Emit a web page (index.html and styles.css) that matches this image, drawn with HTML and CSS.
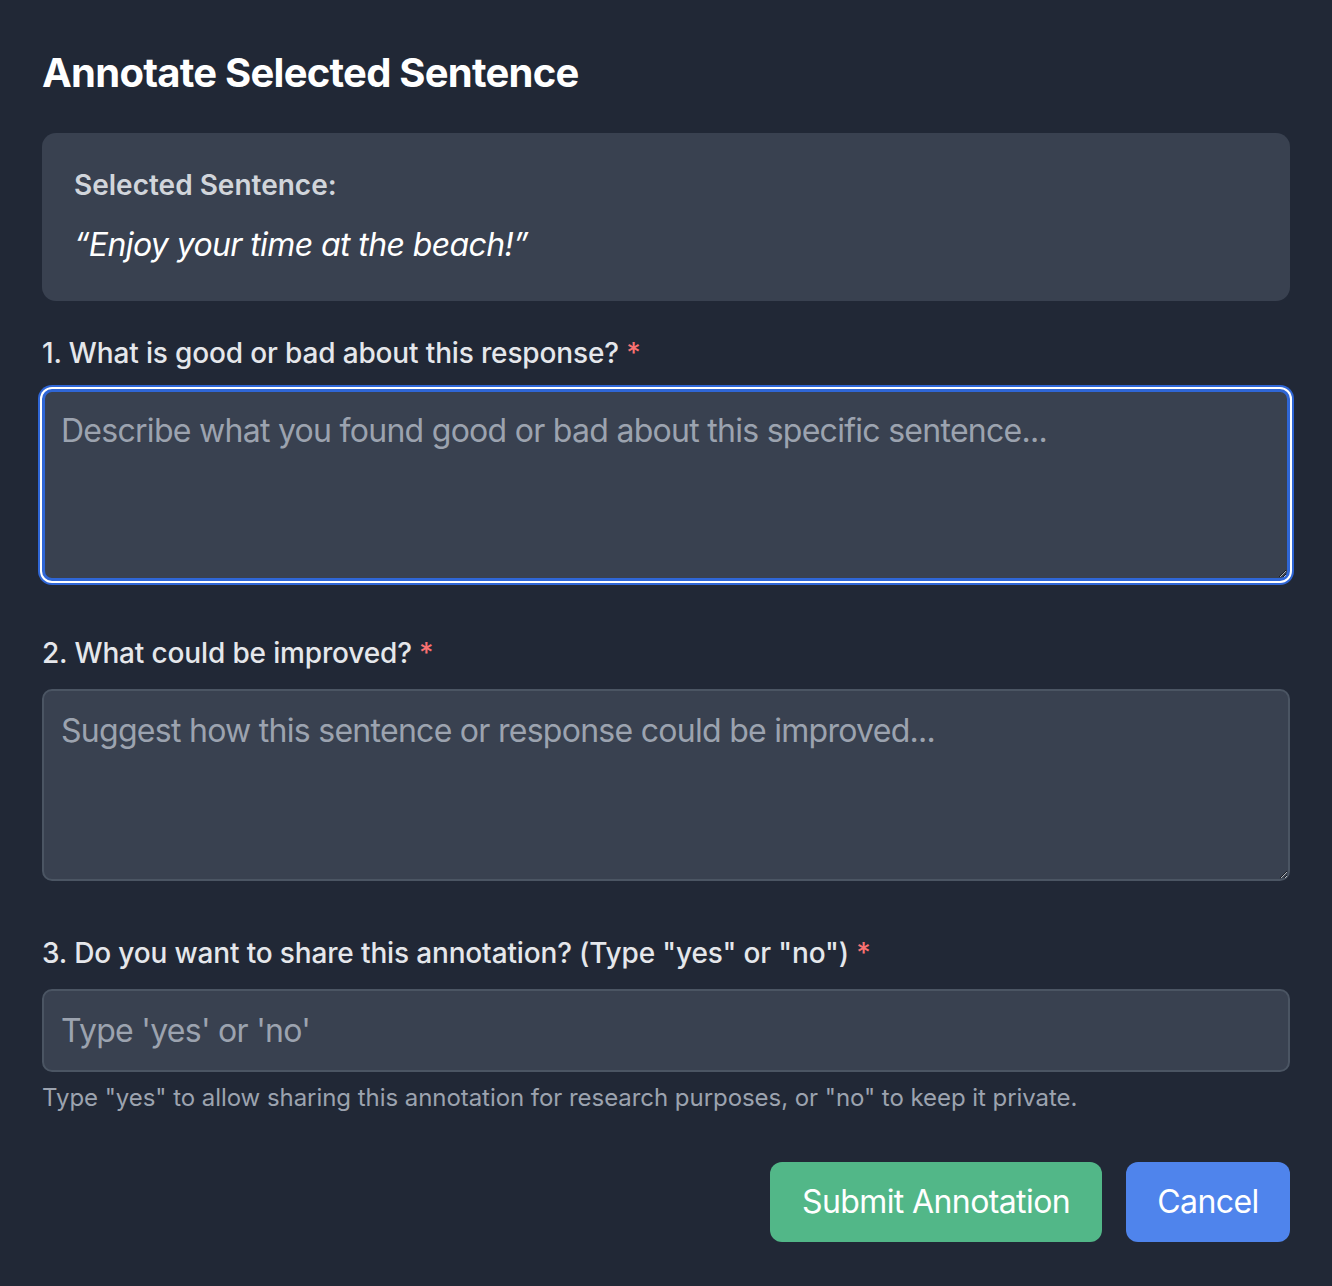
FILE: index.html
```html
<!DOCTYPE html>
<html lang="en">
<head>
<meta charset="utf-8">
<title>Annotate Selected Sentence</title>
<link rel="stylesheet" href="styles.css">
</head>
<body>
<div class="modal">
  <h2 class="title">Annotate Selected Sentence</h2>
  <div class="sentence-card">
    <p class="sentence-label">Selected Sentence:</p>
    <p class="sentence-text">“Enjoy your time at the beach!”</p>
  </div>
  <div class="field">
    <label class="label" for="q1">1. What is good or bad about this response? <span class="req">*</span></label>
    <textarea id="q1" class="textarea focused" placeholder="Describe what you found good or bad about this specific sentence..."></textarea>
  </div>
  <div class="field">
    <label class="label" for="q2">2. What could be improved? <span class="req">*</span></label>
    <textarea id="q2" class="textarea" placeholder="Suggest how this sentence or response could be improved..."></textarea>
  </div>
  <div class="field field-last">
    <label class="label" for="q3">3. Do you want to share this annotation? (Type "yes" or "no") <span class="req">*</span></label>
    <input id="q3" class="input" type="text" placeholder="Type 'yes' or 'no'">
    <p class="help">Type "yes" to allow sharing this annotation for research purposes, or "no" to keep it private.</p>
  </div>
  <div class="actions">
    <button class="btn btn-submit" type="button">Submit Annotation</button>
    <button class="btn btn-cancel" type="button">Cancel</button>
  </div>
</div>
</body>
</html>
```

FILE: styles.css
```css
* { box-sizing: border-box; }
html, body {
  margin: 0;
  padding: 0;
  background: #212836;
}
body {
  font-family: Inter, "Noto Sans", sans-serif;
  color: #e5e7eb;
}
.modal {
  padding: 45px 42px 45px 42px;
}
.title {
  margin: 0 0 32px 0;
  font-size: 40px;
  line-height: 56px;
  font-weight: 700;
  color: #ffffff;
  letter-spacing: -0.75px;
}
.sentence-card {
  background: #394150;
  border-radius: 14px;
  padding: 32px 32px 32px 32px;
  margin-bottom: 32px;
}
.sentence-label {
  margin: 0 0 16px 0;
  font-size: 28px;
  line-height: 40px;
  font-weight: 600;
  color: #d1d5db;
}
.sentence-text {
  margin: 0;
  font-size: 32px;
  line-height: 48px;
  font-style: italic;
  color: #ffffff;
  letter-spacing: -0.6px;
}
.field {
  margin-bottom: 52px;
}
.field-last {
  margin-bottom: 48px;
}
.label {
  display: block;
  font-size: 28px;
  line-height: 40px;
  font-weight: 500;
  color: #e5e7eb;
  margin-bottom: 16px;
  letter-spacing: -0.15px;
}
.req {
  color: #f87171;
}
.textarea, .input {
  display: block;
  width: 100%;
  background: #394150;
  border: 2px solid #4b5563;
  border-radius: 10px;
  color: #f3f4f6;
  font-family: Inter, "Noto Sans", sans-serif;
  font-size: 32px;
  line-height: 48px;
  letter-spacing: -0.72px;
  padding: 16px 17px;
  outline: none;
}
.textarea {
  height: 192px;
  resize: vertical;
}
.input {
  height: 83px;
}
.textarea::placeholder, .input::placeholder {
  color: #9ca3af;
  opacity: 1;
}
.focused {
  border: 3px solid #2f66d6;
  box-shadow: 0 0 0 2px #ffffff, 0 0 0 4px #2f66d6;
  padding: 15px 16px;
}
.help {
  margin: 10px 0 0 0;
  font-size: 24px;
  line-height: 32px;
  color: #9ca3af;
  letter-spacing: -0.05px;
}
.actions {
  display: flex;
  justify-content: flex-end;
  gap: 24px;
}
.btn {
  font-family: Inter, "Noto Sans", sans-serif;
  font-size: 32px;
  line-height: 48px;
  letter-spacing: -0.6px;
  white-space: nowrap;
  padding: 16px 0;
  border: none;
  border-radius: 12px;
  color: #ffffff;
  height: 80px;
  text-align: center;
}
.btn-submit {
  background: #52b788;
  width: 332px;
}
.btn-cancel {
  background: #4f84ec;
  width: 164px;
}
```
